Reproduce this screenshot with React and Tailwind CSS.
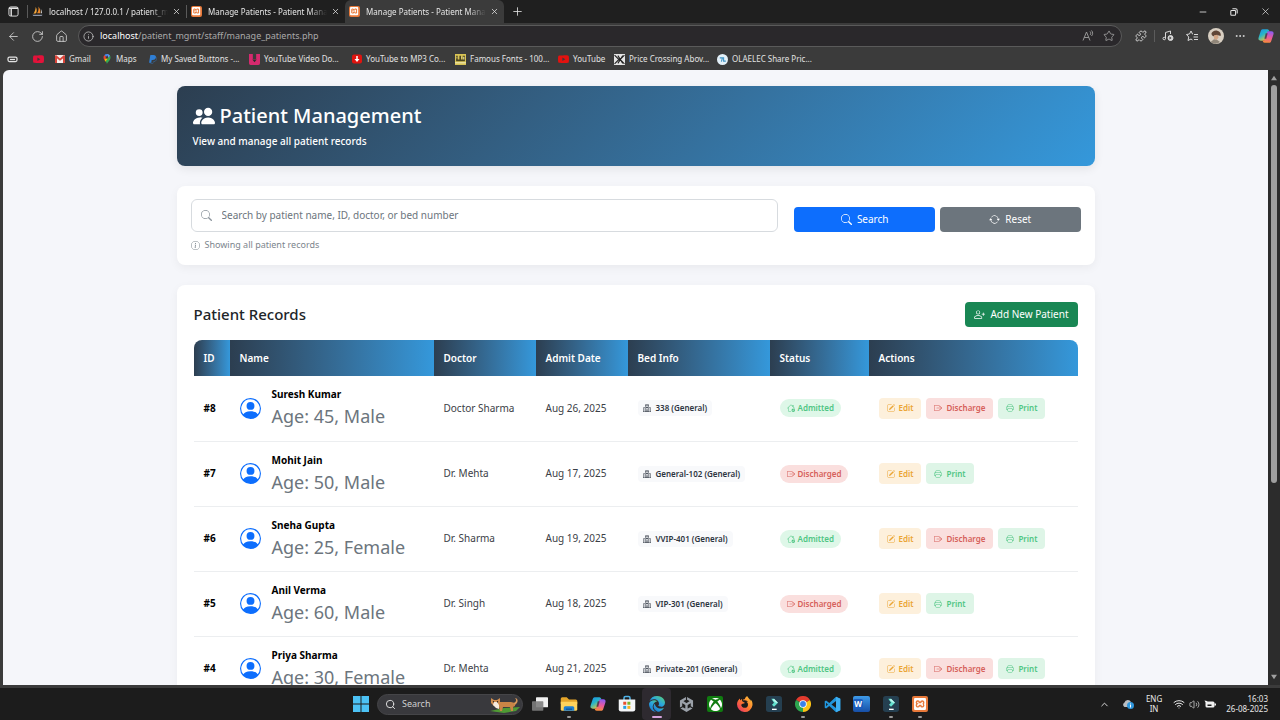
import React from 'react';
import {
  BsPeopleFill,
  BsSearch,
  BsInfoCircle,
  BsArrowRepeat,
  BsPersonPlus,
  BsPersonCircle,
  BsHospital,
  BsHouseCheck,
  BsBoxArrowRight,
  BsPencilSquare,
  BsPrinter,
  BsBrowserEdge,
  BsBrowserFirefox,
  BsXbox,
  BsUnity,
  BsYoutube,
  BsPaypal,
} from 'react-icons/bs';
import { SiXampp } from 'react-icons/si';
import {
  ArrowLeft,
  RotateCw,
  House,
  Info,
  X,
  Plus,
  Minus,
  Star,
  Puzzle,
  Ellipsis,
  ChevronUp,
  Wifi,
  Volume2,
  Search,
} from 'lucide-react';

const patients = [
  { id: 8, name: 'Suresh Kumar', age: 45, gender: 'Male', doctor: 'Doctor Sharma', date: 'Aug 26, 2025', bed: '338 (General)', admitted: true },
  { id: 7, name: 'Mohit Jain', age: 50, gender: 'Male', doctor: 'Dr. Mehta', date: 'Aug 17, 2025', bed: 'General-102 (General)', admitted: false },
  { id: 6, name: 'Sneha Gupta', age: 25, gender: 'Female', doctor: 'Dr. Sharma', date: 'Aug 19, 2025', bed: 'VVIP-401 (General)', admitted: true },
  { id: 5, name: 'Anil Verma', age: 60, gender: 'Male', doctor: 'Dr. Singh', date: 'Aug 18, 2025', bed: 'VIP-301 (General)', admitted: false },
  { id: 4, name: 'Priya Sharma', age: 30, gender: 'Female', doctor: 'Dr. Mehta', date: 'Aug 21, 2025', bed: 'Private-201 (General)', admitted: true },
];

const columns = [
  { label: 'ID', width: 'w-[36px]' },
  { label: 'Name', width: 'w-[204px]' },
  { label: 'Doctor', width: 'w-[102px]' },
  { label: 'Admit Date', width: 'w-[92px]' },
  { label: 'Bed Info', width: 'w-[142px]' },
  { label: 'Status', width: 'w-[99px]' },
  { label: 'Actions', width: '' },
];

/* ---------- small drawings ---------- */

const XamppIcon = ({ className }) => (
  <span className={`flex shrink-0 items-center justify-center rounded-xs bg-[#e8793a] text-white ${className}`}>
    <SiXampp className="h-3/4 w-3/4" />
  </span>
);

const SailIcon = ({ className }) => (
  <svg viewBox="0 0 24 24" className={className} aria-hidden="true">
    <path d="M8 2c3 4 3 9 1 14L3 17C6 12 8 7 8 2z" fill="#f0a43a" />
    <path d="M14 1c4 5 5 10 4 15l-7 0c3-5 4-10 3-15z" fill="#e8872a" />
    <path d="M19 6c2 3 3 7 3 10h-3c1-3 1-6 0-10z" fill="#c9c9c9" />
    <path d="M1 19h22l-2 3H3z" fill="#8f96a8" />
  </svg>
);

const CopilotIcon = ({ className }) => (
  <svg viewBox="0 0 24 24" className={className} aria-hidden="true">
    <defs>
      <linearGradient id="copA" x1="0" y1="0" x2="0.6" y2="1">
        <stop offset="0" stopColor="#1b8fe8" />
        <stop offset="0.5" stopColor="#27b5c9" />
        <stop offset="1" stopColor="#e6c53a" />
      </linearGradient>
      <linearGradient id="copB" x1="0.6" y1="0" x2="0.4" y2="1">
        <stop offset="0" stopColor="#8b5cf0" />
        <stop offset="0.5" stopColor="#e858a0" />
        <stop offset="1" stopColor="#f98a3c" />
      </linearGradient>
    </defs>
    <path d="M7 2h7c2 0 2.500 1.500 3 3l-3 1-3.500 11C10 19 9 19 7.500 19H4c-3 0-4-2-3-5L4 5c.6-2 1.500-3 3-3z" fill="url(#copA)" />
    <path d="M17 22h-7c-2 0-2.500-1.500-3-3l3-1 3.500-11C14 5 15 5 16.500 5H20c3 0 4 2 3 5l-3 9c-.6 2-1.500 3-3 3z" fill="url(#copB)" />
    <path d="M11.500 8h3l-2 8h-3z" fill="#3b2a3a" opacity="0.7" />
  </svg>
);

const MapsPin = ({ className }) => (
  <svg viewBox="0 0 16 20" className={className} aria-hidden="true">
    <path d="M8 0a7 7 0 0 0-5.500 2.600L8 7z" fill="#4285f4" />
    <path d="M2.500 2.600A7 7 0 0 0 1 7c0 2 .6 3.300 1.500 4.600L8 7z" fill="#ea4335" />
    <path d="M2.500 11.600 6 16l8-10.500A7 7 0 0 0 8 7z" fill="#fbbc04" />
    <path d="M8 20c1-4 7-7 7-13 0-1.500-.4-2.700-1-3.800L5.500 14.500C7 17 7.300 18 8 20z" fill="#34a853" />
    <path d="M8 0c2.600 0 4.800 1.300 6 3.300L10 8z" fill="#5a9bf5" />
    <circle cx="8" cy="7" r="2.500" fill="#3b3b3b" />
  </svg>
);

const GmailIcon = ({ className }) => (
  <svg viewBox="0 0 20 16" className={className} aria-hidden="true">
    <rect width="20" height="16" rx="2" fill="#f3e9e8" />
    <path d="M0 2v14h4V7l6 5 6-5v9h4V2l-2-2-8 7-8-7z" fill="#d9453a" />
    <path d="M4 7v9h12V7l-6 5z" fill="#f6eeee" />
  </svg>
);

const DownloadTile = ({ className }) => (
  <svg viewBox="0 0 20 20" className={className} aria-hidden="true">
    <path d="M0 0h7v9h6V0h7v17a3 3 0 0 1-3 3H3a3 3 0 0 1-3-3z" fill="#d62a6e" />
    <path d="M6 10h8l-4 5z" fill="#2b2b2b" />
  </svg>
);

const Mp3Icon = ({ className }) => (
  <svg viewBox="0 0 20 20" className={className} aria-hidden="true">
    <rect y="1" width="20" height="18" rx="4" fill="#e0140f" />
    <path d="M8.500 4h3v6H15l-5 6-5-6h3.500z" fill="#fff" />
  </svg>
);

const FontsIcon = ({ className }) => (
  <svg viewBox="0 0 20 20" className={className} aria-hidden="true">
    <rect width="20" height="20" fill="#d8c355" />
    <path d="M2 3h3v7h3V3h3v7h3V3h4v10H2z" fill="#4c451f" />
    <path d="M0 15h20v2H0z" fill="#f2e9b0" />
    <path d="M3 5h1v3H3zM12 5h1v3h-1zM15 5h2v5h-2z" fill="#f2e9b0" />
  </svg>
);

const PriceIcon = ({ className }) => (
  <svg viewBox="0 0 20 20" className={className} aria-hidden="true">
    <rect width="20" height="20" fill="#e4e4e4" />
    <path d="M1 2l8 8-8 8M19 2l-8 8 8 8M7 3l9 14M16 3 7 17" fill="none" stroke="#222" strokeWidth="2" />
  </svg>
);

const OlaIcon = ({ className }) => (
  <svg viewBox="0 0 20 20" className={className} aria-hidden="true">
    <circle cx="10" cy="10" r="10" fill="#e3f0f8" />
    <path d="M5 7h5l-2 7M12 6v7h4" fill="none" stroke="#3f93c4" strokeWidth="2" />
  </svg>
);

const AvatarIcon = ({ className }) => (
  <svg viewBox="0 0 24 24" className={className} aria-hidden="true">
    <circle cx="12" cy="12" r="12" fill="#d8cfc2" />
    <path d="M5 9c1-4 5-6 9-5s6 4 5 8l-4-1-3 2-5-1z" fill="#5f4637" />
    <path d="M9 11l5-1 2 4-3 4-4-2z" fill="#d3a787" />
    <path d="M4 21l5-4 5 1 4 3a12 12 0 0 1-14 0z" fill="#8f8578" />
  </svg>
);

const ExplorerIcon = () => (
  <svg viewBox="0 0 24 24" className="h-[18px] w-[18px]" aria-hidden="true">
    <path d="M1 5a2 2 0 0 1 2-2h6l3 3h9a2 2 0 0 1 2 2v4H1z" fill="#e5a52a" />
    <path d="M1 9h22v10a2 2 0 0 1-2 2H3a2 2 0 0 1-2-2z" fill="#ffd35c" />
    <path d="M5 21v-4a2 2 0 0 1 2-2h10a2 2 0 0 1 2 2v4z" fill="#1f7fd0" />
    <path d="M8 18h8v2H8z" fill="#0f5ca3" />
  </svg>
);

const StoreIcon = () => (
  <svg viewBox="0 0 24 24" className="h-[18px] w-[18px]" aria-hidden="true">
    <path d="M8 7V4a2 2 0 0 1 2-2h4a2 2 0 0 1 2 2v3" fill="none" stroke="#4fb3e8" strokeWidth="2" />
    <path d="M1 6h22v13a3 3 0 0 1-3 3H4a3 3 0 0 1-3-3z" fill="#f4f6f8" />
    <path d="M7 9h4v4H7z" fill="#e8502e" />
    <path d="M12.500 9h4v4h-4z" fill="#7bb52b" />
    <path d="M7 14.500h4v4H7z" fill="#28a0e0" />
    <path d="M12.500 14.500h4v4h-4z" fill="#f5b521" />
  </svg>
);

const FilmoraIcon = () => (
  <svg viewBox="0 0 24 24" className="h-4 w-4" aria-hidden="true">
    <rect width="24" height="24" rx="4" fill="#253f50" />
    <path d="M8 4l4 0 6 6-6 6-3-3 3-3z" fill="#63e2cf" />
    <path d="M12 4l6 6-3 0-5-4z" fill="#c5f7ee" />
    <rect x="9" y="19" width="7" height="2" fill="#fff" />
  </svg>
);

const ChromeIcon = () => (
  <svg viewBox="0 0 24 24" className="h-4 w-4" aria-hidden="true">
    <path d="M12 12 1.600 6A12 12 0 0 1 22.400 6z" fill="#e33b2e" />
    <path d="M12 12 22.400 6A12 12 0 0 1 12 24z" fill="#fbc116" />
    <path d="M12 12v12A12 12 0 0 1 1.600 6z" fill="#2da44e" />
    <circle cx="12" cy="12" r="5.600" fill="#fff" />
    <circle cx="12" cy="12" r="4.400" fill="#3b82ea" />
  </svg>
);

const VsCodeIcon = () => (
  <svg viewBox="0 0 24 24" className="h-[17px] w-[17px]" aria-hidden="true">
    <path d="M17 1 7.500 10 3 6.500 1 7.500v9l2 1L7.500 14l9.500 9 6-3V4zm0 6v10l-6.500-5zM3 9.500 5.500 12 3 14.500z" fill="#2196dc" fillRule="evenodd" />
    <path d="M17 1l6 3v16l-6 3z" fill="#3fb0f2" />
  </svg>
);

const WordIcon = () => (
  <span className="flex h-4 w-[17px] items-center rounded-xs bg-linear-to-b from-[#3f9be8] to-[#174ea6]">
    <span className="flex h-[10px] w-[10px] items-center justify-center rounded-xs bg-[#1b5dbe] text-[8px] leading-none font-bold text-white">W</span>
  </span>
);

const TaskViewIcon = () => (
  <svg viewBox="0 0 24 24" className="h-4 w-4" aria-hidden="true">
    <rect x="6" y="2" width="18" height="15" rx="1" fill="#f0f0f0" />
    <rect x="0" y="8" width="17" height="14" rx="1" fill="#7d7d7d" opacity="0.9" />
  </svg>
);

const CorgiIcon = () => (
  <svg viewBox="0 0 32 18" className="h-[18px] w-8" aria-hidden="true">
    <path d="M1 16l14-3 16-1-4 4-12 2z" fill="#4f9a34" />
    <path d="M9 7h13l4 1v3l-2 1 0 4h-2l-1-4h-7l-1 4h-2l-1-4-2-2z" fill="#c98546" />
    <path d="M25 8c2-1 3-3 1-5 3 0 4 4 0 7z" fill="#d9995a" />
    <path d="M2 3l3 2h3l3-2v5l-2 3H5L2 8z" fill="#cf8d50" />
    <path d="M5 7h3l2 3v4l-3-1-3-3z" fill="#f6eade" />
    <circle cx="4.500" cy="6.800" r="0.700" fill="#222" />
    <circle cx="8.500" cy="6.800" r="0.700" fill="#222" />
  </svg>
);

/* ---------- browser chrome ---------- */

const tabs = [
  { title: 'localhost / 127.0.0.1 / patient_mg', icon: <SailIcon className="h-[11px] w-[11px] shrink-0" /> },
  { title: 'Manage Patients - Patient Manag', icon: <XamppIcon className="h-[11px] w-[11px]" /> },
  { title: 'Manage Patients - Patient Manag', icon: <XamppIcon className="h-[11px] w-[11px]" />, active: true },
];

const TabStrip = () => (
  <div className="flex h-[23px] items-center bg-[#1f1f1f] text-[#e6e6e6]">
    <button className="flex w-[27px] justify-center" aria-label="Tab actions">
      <svg viewBox="0 0 12 12" className="h-[11px] w-[11px]" fill="none" stroke="currentColor">
        <rect x="1" y="1" width="10" height="10" rx="2" />
        <path d="M1 2.500h10M3.500 2v9" strokeWidth="1.500" />
      </svg>
    </button>
    {tabs.map((tab, i) => (
      <div
        key={i}
        className={`flex w-[159px] items-center pr-px pl-1 ${tab.active ? 'h-full rounded-t-md bg-[#3b3b3b]' : 'h-[13px] border-l border-[#5a5a5a]'}`}
      >
        {tab.icon}
        <span className="ml-[6px] min-w-0 flex-1 mask-r-from-85% text-[8px] whitespace-nowrap">{tab.title}</span>
        <button className="p-1" aria-label="Close tab"><X size={9} /></button>
      </div>
    ))}
    <button className="ml-[3px] p-1" aria-label="New tab"><Plus size={13} strokeWidth={1.5} /></button>
    <div className="ml-auto flex items-center gap-[18px] pr-[9px]">
      <button aria-label="Minimize"><Minus size={10} /></button>
      <button aria-label="Restore">
        <svg viewBox="0 0 10 10" className="mx-1 h-2 w-2" fill="none" stroke="currentColor" strokeWidth="1.300">
          <rect x="1" y="3" width="6" height="6" rx="1" />
          <path d="M3 1h4a2 2 0 0 1 2 2v4" />
        </svg>
      </button>
      <button aria-label="Close window"><X size={11} strokeWidth={1.5} /></button>
    </div>
  </div>
);

const AddressBar = () => (
  <div className="flex h-[26px] items-center text-[#d8d8d8]">
    <div className="flex w-[78px] items-center gap-[11px] pl-[7px]">
      <button aria-label="Back"><ArrowLeft size={13} strokeWidth={1.5} /></button>
      <button aria-label="Refresh"><RotateCw size={13} strokeWidth={1.5} /></button>
      <button aria-label="Home"><House size={13} strokeWidth={1.5} /></button>
    </div>
    <div className="flex h-[22px] flex-1 items-center rounded-full border border-[#5a5a5a] bg-[#2a282b] px-1">
      <Info size={11} strokeWidth={1.5} />
      <p className="ml-[6px] flex-1 text-[9px] text-[#a9a9a9]">
        <span className="text-white">localhost</span>/patient_mgmt/staff/manage_patients.php
      </p>
      <button className="mr-[9px] text-[#a0a0a0]" aria-label="Read aloud">
        <svg viewBox="0 0 24 24" className="h-3 w-3" fill="none" stroke="currentColor" strokeWidth="1.800">
          <path d="M2 21 9 4l7 17M4.500 15h9M16 3c2 2 2 5 0 7M19 1c3 3 3 8 0 11" />
        </svg>
      </button>
      <button className="mr-[2px] text-[#b0b0b0]" aria-label="Favorite"><Star size={12} strokeWidth={1.5} /></button>
    </div>
    <div className="flex items-center pr-[6px] pl-[13px]">
      <button aria-label="Extensions"><Puzzle size={12} strokeWidth={1.8} /></button>
      <span className="mx-[7px] h-3 w-px bg-[#5c5c5c]" />
      <button aria-label="Media">
        <svg viewBox="0 0 24 24" className="h-3 w-3" fill="none" stroke="currentColor" strokeWidth="2">
          <path d="M7 17V5l10-3v6" />
          <circle cx="4.500" cy="17" r="2.500" />
          <circle cx="17" cy="16" r="5" fill="currentColor" />
          <path d="M15 13l4 3-4 3z" fill="#3b3b3b" stroke="none" />
        </svg>
      </button>
      <button className="ml-3" aria-label="Favorites list">
        <svg viewBox="0 0 24 24" className="h-3 w-3" fill="none" stroke="currentColor" strokeWidth="2">
          <path d="M14 8h-1L10 2 7 8l-6 1 4.500 5L4 21l6-3 3 2M16 9h8M15 14h9M16 19h8" />
        </svg>
      </button>
      <button className="ml-[10px]" aria-label="Profile"><AvatarIcon className="h-4 w-4" /></button>
      <button className="ml-[10px]" aria-label="More"><Ellipsis size={12} /></button>
      <button className="ml-[12px]" aria-label="Copilot"><CopilotIcon className="h-4 w-4" /></button>
    </div>
  </div>
);

const bookmarks = [
  { label: 'Gmail', icon: <GmailIcon className="h-2 w-[10px]" />, width: 'w-[44px]' },
  { label: 'Maps', icon: <MapsPin className="h-[10px] w-[10px]" />, width: 'w-[43px]' },
  { label: 'My Saved Buttons -...', icon: <BsPaypal className="h-[9px] w-[9px] text-[#2f7fd6]" />, width: 'w-[98px]' },
  { label: 'YouTube Video Do...', icon: <DownloadTile className="h-[11px] w-[11px]" />, width: 'w-[100px]' },
  { label: 'YouTube to MP3 Co...', icon: <Mp3Icon className="h-[10px] w-[10px]" />, width: 'w-[100px]' },
  { label: 'Famous Fonts - 100...', icon: <FontsIcon className="h-[11px] w-[11px]" />, width: 'w-[100px]' },
  { label: 'YouTube', icon: <BsYoutube className="h-[11px] w-[11px] text-[#e3120f]" />, width: 'w-[53px]' },
  { label: 'Price Crossing Abov...', icon: <PriceIcon className="h-[11px] w-[11px]" />, width: 'w-[100px]' },
  { label: 'OLAELEC Share Pric...', icon: <OlaIcon className="h-[11px] w-[11px]" />, width: 'w-[100px]' },
];

const BookmarkBar = () => (
  <nav className="flex h-5 items-center text-[#e2e2e2]">
    <span className="flex w-[33px] pl-[7px]">
      <svg viewBox="0 0 22 14" className="h-[7px] w-[11px]" fill="none" stroke="currentColor" strokeWidth="2.500">
        <rect x="2" y="2" width="18" height="9" rx="3" />
        <path d="M6 7h10" />
      </svg>
    </span>
    <a href="#" className="w-[22px]" aria-label="YouTube home"><BsYoutube className="h-[11px] w-[11px] text-[#e3123a]" /></a>
    <div className="flex gap-[3px]">
      {bookmarks.map((b) => (
        <a key={b.label} href="#" className={`flex items-center gap-1 text-[8px] whitespace-nowrap ${b.width}`}>
          {b.icon}
          {b.label}
        </a>
      ))}
    </div>
  </nav>
);

const Scrollbar = () => (
  <div className="flex w-3 flex-col items-center bg-[#2c2c2c] py-[5px]">
    <svg viewBox="0 0 8 6" className="h-[6px] w-[6px]" fill="#a0a0a0"><path d="M4 0l4 6H0z" /></svg>
    <div className="my-[4px] flex w-full flex-1 flex-col items-center">
      <div className="h-[68%] w-[6px] rounded-full bg-[#9f9f9f]" />
    </div>
    <svg viewBox="0 0 8 6" className="h-[6px] w-[6px]" fill="#a0a0a0"><path d="M4 6l4-6H0z" /></svg>
  </div>
);

/* ---------- page ---------- */

const actionBase = 'flex h-[21px] items-center gap-1 rounded px-2 text-[8px] font-semibold';

const PatientRow = ({ patient }) => {
  const { id, name, age, gender, doctor, date, bed, admitted } = patient;

  return (
    <tr className="h-[65px] border-b border-[#eceef0]">
      <td className="px-[10px] text-[10px] font-bold text-black">#{id}</td>
      <td className="px-[10px]">
        <div className="flex items-center gap-[11px]">
          <BsPersonCircle className="h-[21px] w-[21px] text-[#0d6efd]" />
          <div>
            <div className="text-[10px] leading-[16px] font-bold text-black">{name}</div>
            <div className="text-[18px] leading-[28px] text-[#6c757d]">Age: {age}, {gender}</div>
          </div>
        </div>
      </td>
      <td className="px-[10px]">{doctor}</td>
      <td className="px-[10px]">{date}</td>
      <td className="px-[10px]">
        <span className="inline-flex h-4 items-center gap-[5px] rounded bg-[#f8f9fb] px-[5px] text-[8px] font-semibold whitespace-nowrap text-[#2c3440]">
          <BsHospital className="h-2 w-2" />
          {bed}
        </span>
      </td>
      <td className="px-[10px]">
        <span
          className={`inline-flex h-[18px] items-center gap-[3px] rounded-full px-[7px] text-[8px] font-semibold ${
            admitted ? 'bg-[#def7e8] text-[#4fc583]' : 'bg-[#fadfde] text-[#d65f5a]'
          }`}
        >
          {admitted ? <BsHouseCheck className="h-2 w-2" /> : <BsBoxArrowRight className="h-2 w-2" />}
          {admitted ? 'Admitted' : 'Discharged'}
        </span>
      </td>
      <td className="px-[10px]">
        <div className="flex gap-[5px]">
          <button className={`${actionBase} bg-[#fdf0dc] text-[#eba535]`}>
            <BsPencilSquare className="h-2 w-2" />
            Edit
          </button>
          {admitted && (
            <button className={`${actionBase} bg-[#fadfde] text-[#d65f5a]`}>
              <BsBoxArrowRight className="h-2 w-2" />
              Discharge
            </button>
          )}
          <button className={`${actionBase} bg-[#def5e7] text-[#4fc583]`}>
            <BsPrinter className="h-2 w-2" />
            Print
          </button>
        </div>
      </td>
    </tr>
  );
};

const PatientPage = () => (
  <main className="flex-1 overflow-hidden rounded-tl-md bg-[#f5f6fa] px-4 py-4">
    <div className="mx-auto flex max-w-[918px] flex-col gap-5">
      <header className="flex h-20 flex-col justify-center rounded-lg bg-linear-135 from-[#2c3e50] to-[#3498db] px-4 text-white shadow-[0_3px_10px_rgba(0,0,0,0.08)]">
        <h1 className="flex items-center gap-[5px] text-[20px] leading-[30px] font-medium">
          <BsPeopleFill className="h-[22px] w-[22px]" />
          Patient Management
        </h1>
        <p className="text-[10px] leading-[20px] font-medium">View and manage all patient records</p>
      </header>

      <section className="rounded-lg bg-white px-[14px] pt-[13px] pb-3 shadow-[0_3px_10px_rgba(0,0,0,0.05)]">
        <form className="grid grid-cols-[37fr_18fr] items-end gap-4">
          <label className="flex h-[33px] items-center rounded-md border border-[#d7dbdf] px-[9px]">
            <BsSearch className="h-[11px] w-[11px] text-[#8b949c]" />
            <input
              type="text"
              aria-label="Search patients"
              placeholder="Search by patient name, ID, doctor, or bed number"
              className="ml-[10px] flex-1 bg-transparent text-[10px] text-[#212529] outline-none placeholder:text-[#6c757d]"
            />
          </label>
          <div className="grid grid-cols-2 gap-[5px] text-[10px] text-white">
            <button type="button" className="flex h-[25px] items-center justify-center gap-[5px] rounded bg-[#0d6efd]">
              <BsSearch size={11} />
              Search
            </button>
            <button type="button" className="flex h-[25px] items-center justify-center gap-[5px] rounded bg-[#6c757d]">
              <BsArrowRepeat size={11} />
              Reset
            </button>
          </div>
        </form>
        <p className="mt-[5px] flex items-center gap-[5px] text-[9px] leading-[16px] text-[#7c858d]">
          <BsInfoCircle size={9} />
          Showing all patient records
        </p>
      </section>

      <section className="rounded-lg bg-white p-[17px] shadow-[0_3px_10px_rgba(0,0,0,0.05)]">
        <div className="flex items-center justify-between">
          <h2 className="text-[15px] font-medium text-[#212529]">Patient Records</h2>
          <button className="flex h-[25px] items-center gap-[5px] rounded bg-[#198754] px-[9px] text-[10px] text-white">
            <BsPersonPlus size={11} />
            Add New Patient
          </button>
        </div>
        <table className="mt-[13px] w-full table-fixed border-collapse overflow-hidden rounded-t-lg text-left text-[10px] text-[#3b4046]">
          <thead>
            <tr className="h-9">
              {columns.map((c) => (
                <th key={c.label} className={`bg-linear-to-r from-[#2c3e50] to-[#3498db] px-[10px] font-semibold text-white ${c.width}`}>
                  {c.label}
                </th>
              ))}
            </tr>
          </thead>
          <tbody>
            {patients.map((p) => (
              <PatientRow key={p.id} patient={p} />
            ))}
          </tbody>
        </table>
      </section>
    </div>
  </main>
);

/* ---------- taskbar ---------- */

const apps = [
  { name: 'Task View', icon: <TaskViewIcon /> },
  { name: 'File Explorer', icon: <ExplorerIcon />, open: true },
  { name: 'Copilot', icon: <CopilotIcon className="h-4 w-4" /> },
  { name: 'Store', icon: <StoreIcon /> },
  { name: 'Edge', icon: <BsBrowserEdge size={16} fill="url(#edgeFill)" />, active: true },
  { name: 'Unity', icon: <BsUnity size={15} className="text-[#9aa0a8]" /> },
  {
    name: 'Xbox',
    icon: (
      <span className="flex h-4 w-4 items-center justify-center rounded-xs bg-[#107c10] text-white">
        <BsXbox size={13} />
      </span>
    ),
  },
  { name: 'Firefox', icon: <BsBrowserFirefox size={16} fill="url(#foxFill)" /> },
  { name: 'Filmora', icon: <FilmoraIcon /> },
  { name: 'Chrome', icon: <ChromeIcon />, open: true },
  { name: 'VS Code', icon: <VsCodeIcon /> },
  { name: 'Word', icon: <WordIcon /> },
  { name: 'Filmora Editor', icon: <FilmoraIcon />, open: true },
  { name: 'XAMPP', icon: <XamppIcon className="h-4 w-4" />, open: true },
];

const Taskbar = () => (
  <footer className="grid h-8 grid-cols-[1fr_590px_1fr] items-center bg-[#1c1c1c] text-[#e8e8e8]">
    <svg className="h-0 w-0" aria-hidden="true">
      <defs>
        <linearGradient id="edgeFill" x1="0" y1="1" x2="1" y2="0">
          <stop offset="0" stopColor="#1668c4" />
          <stop offset="0.5" stopColor="#2aa6e0" />
          <stop offset="1" stopColor="#5fd66a" />
        </linearGradient>
        <linearGradient id="foxFill" x1="1" y1="0" x2="0" y2="1">
          <stop offset="0" stopColor="#ffd23c" />
          <stop offset="0.5" stopColor="#ff7a2e" />
          <stop offset="1" stopColor="#e6286e" />
        </linearGradient>
      </defs>
    </svg>
    <div className="flex items-center">
      <button className="flex w-8 justify-center" aria-label="Start">
        <svg viewBox="0 0 16 16" className="h-4 w-4" fill="#4cc2f5">
          <path d="M0 0h7.500v7.500H0zM8.500 0H16v7.500H8.500zM0 8.500h7.500V16H0zM8.500 8.500H16V16H8.500z" />
        </svg>
      </button>
      <button className="flex h-[21px] w-[146px] items-center rounded-full border border-[#454548] bg-[#39393d] pr-px pl-[7px] text-[9px]">
        <Search size={11} />
        <span className="ml-[6px] flex-1 text-left text-[#d0d0d0]">Search</span>
        <CorgiIcon />
      </button>
      <div className="ml-[2px] flex h-8 flex-1">
        {apps.map((app) => (
          <button
            key={app.name}
            aria-label={app.name}
            className={`relative flex flex-1 items-center justify-center rounded-sm ${app.active ? 'bg-[#2e2a30]' : ''}`}
          >
            {app.icon}
            {app.open && <span className="absolute bottom-[2px] h-[2px] w-1 rounded-full bg-[#9a9a9a]" />}
            {app.active && <span className="absolute bottom-[2px] h-[2px] w-[10px] rounded-full bg-[#d5a3dc]" />}
          </button>
        ))}
      </div>
    </div>
    <div className="flex items-center justify-end pr-3 text-[8px] leading-[10px]">
      <ChevronUp size={11} />
      <svg viewBox="0 0 24 20" className="ml-3 h-[10px] w-3" aria-hidden="true">
        <path d="M5 16a5 5 0 0 1 0-9 7 7 0 0 1 13-1v10z" fill="#b9bdc2" />
        <circle cx="17" cy="13" r="7" fill="#2f96dc" />
        <path d="M16 9h2v2h-2zM16 12h2v5h-2z" fill="#fff" />
      </svg>
      <div className="ml-3 text-center">
        <div>ENG</div>
        <div>IN</div>
      </div>
      <div className="ml-[11px] flex items-center gap-1">
        <Wifi size={12} />
        <Volume2 size={11} strokeWidth={1.5} />
        <svg viewBox="0 0 24 16" className="h-2 w-3" aria-hidden="true">
          <rect x="3" y="3" width="18" height="12" rx="3" fill="#f0f0f0" />
          <path d="M21 7h3v4h-3zM1 1l5 1 2 4-5-1z" fill="#f0f0f0" />
          <path d="M7 9h8v3H7z" fill="#1c1c1c" />
        </svg>
      </div>
      <div className="ml-[10px] text-right">
        <div>16:03</div>
        <div>26-08-2025</div>
      </div>
    </div>
  </footer>
);

export default function App() {
  return (
    <div className="flex h-screen flex-col overflow-hidden bg-[#3b3b3b] font-['Noto_Sans','Open_Sans',sans-serif]">
      <TabStrip />
      <AddressBar />
      <BookmarkBar />
      <div className="mt-px mb-[3px] flex min-h-0 flex-1 pl-[3px]">
        <PatientPage />
        <Scrollbar />
      </div>
      <Taskbar />
    </div>
  );
}
